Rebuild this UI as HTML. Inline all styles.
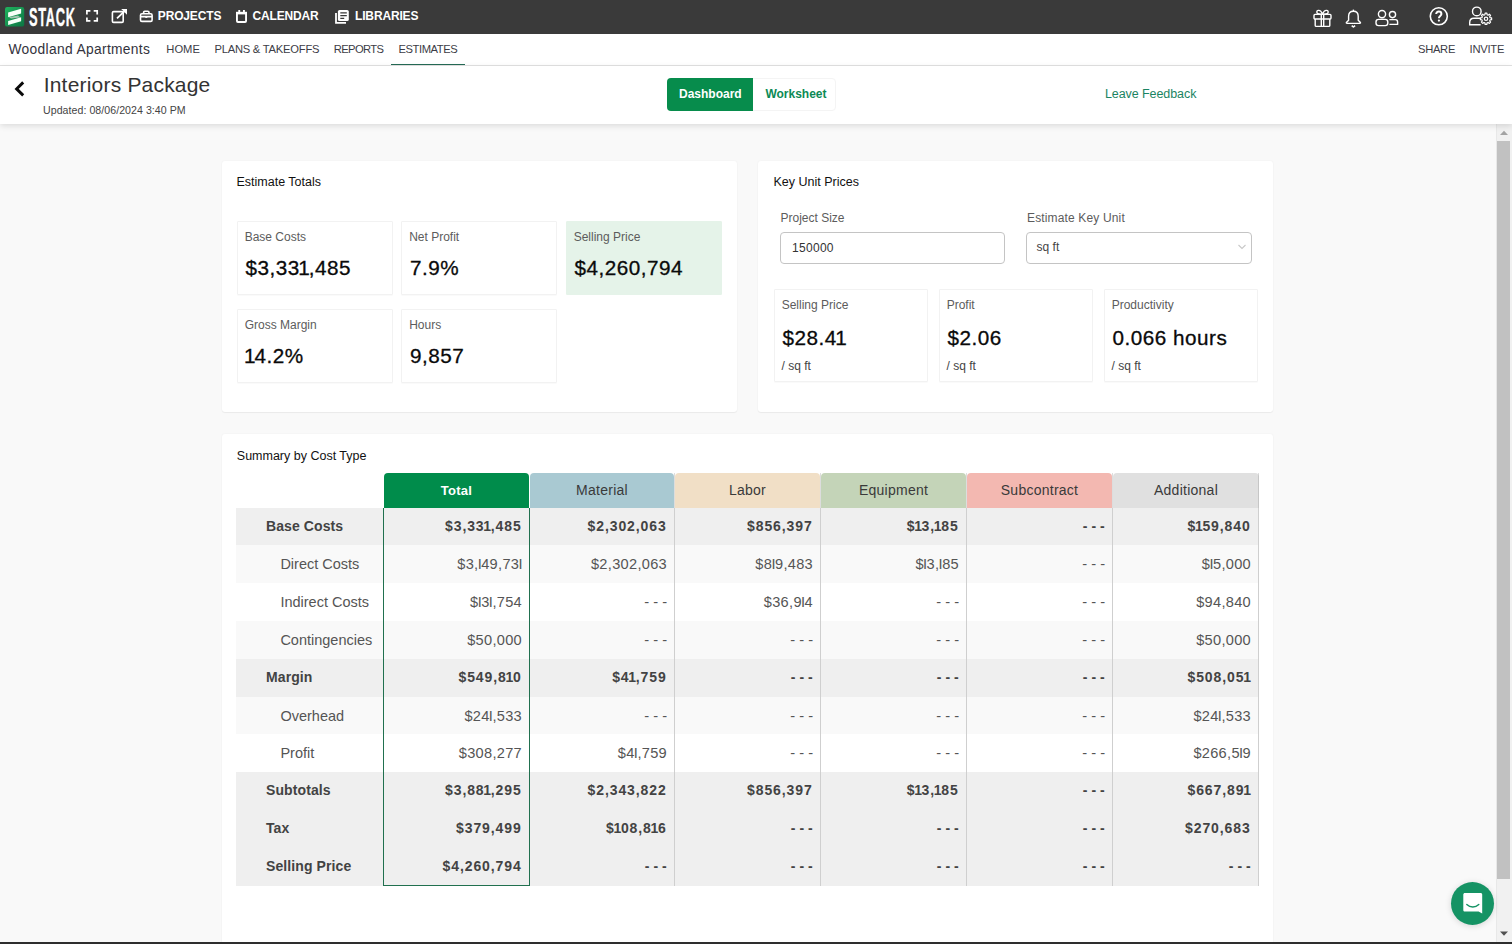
<!DOCTYPE html>
<html><head><meta charset="utf-8">
<style>
*{box-sizing:border-box;margin:0;padding:0}
html,body{width:1512px;height:944px;overflow:hidden}
body{position:relative;background:#f9f9f9;font-family:"Liberation Sans",sans-serif;color:#333}
.a{position:absolute;white-space:nowrap}
#top{position:absolute;left:0;top:0;width:1512px;height:34px;background:#3a3a3a}
.tn{position:absolute;top:9.5px;font-size:12px;line-height:12px;font-weight:700;color:#fff;letter-spacing:0}
#nav{position:absolute;left:0;top:34px;width:1512px;height:32px;background:#fff;border-bottom:1px solid #e2e2e2}
.nv{position:absolute;top:10.2px;font-size:11.2px;line-height:11.2px;color:#3c3c46}
#hdr{position:absolute;z-index:5;left:0;top:66px;width:1512px;height:58px;background:#fff;box-shadow:0 2px 6px rgba(0,0,0,.12)}
.card{position:absolute;background:#fff;border-radius:3px;box-shadow:0 0 2px rgba(0,0,0,.05),0 1px 1px rgba(0,0,0,.05)}
.ttl{position:absolute;font-size:12.5px;line-height:12.5px;color:#111;white-space:nowrap}
.tile{position:absolute;background:#fff;border:1px solid #f2f2f2;border-radius:1px;box-shadow:0 1px 1px rgba(0,0,0,.025)}
.tl{position:absolute;left:7.2px;font-size:12px;line-height:12px;color:#5c5c5c;white-space:nowrap}
.tv{position:absolute;left:8px;font-size:20.7px;line-height:20.7px;color:#0a0a0a;white-space:nowrap;letter-spacing:.5px;-webkit-text-stroke:.3px #0a0a0a}
.tv .o{font-style:normal;margin:0 -1.5px}
.tu{position:absolute;left:7px;font-size:12px;line-height:12px;color:#444;white-space:nowrap}
.inp{position:absolute;border:1px solid #c4c4c4;border-radius:4px;background:#fff}





/* TCSS START */
.th{position:absolute;top:473px;height:35px;line-height:35px;text-align:center;border-radius:4px 4px 0 0;white-space:nowrap;letter-spacing:.25px}
.tr{position:absolute;left:236px;width:1023px;height:37.81px}
.o{font-style:normal}
.tg .o{margin:0 -.8px}
.tb .o{margin:0 -1.25px}
.tb,.tg{position:absolute;height:37.81px;line-height:37.81px;white-space:nowrap}
.tb{font-weight:700;font-size:14px;color:#434343}
.tg{font-weight:400;font-size:14.5px;color:#555;padding-top:1px}
.lb{left:266px;letter-spacing:.1px}
.lr{left:280.4px}
.vv{text-align:right;padding-right:8px}
.tb.vv{letter-spacing:.9px;padding-right:7.4px}
.tg.vv{letter-spacing:.3px;font-size:14.6px;padding-right:7px}
.dd{letter-spacing:0!important}
.vd{position:absolute;width:1px;background:#cfcfcf}
.gb{position:absolute;border:1px solid #21704f;border-top:none}
/* TCSS END */
</style></head><body>

<!-- TOP BAR -->
<div id="top">
  <svg class="a" style="left:4px;top:6px" width="22" height="22" viewBox="0 0 22 22">
    <defs><linearGradient id="lg" x1="0" y1="0" x2="1" y2="1"><stop offset="0" stop-color="#20b45e"/><stop offset="1" stop-color="#0c7443"/></linearGradient></defs>
    <rect x="1" y="1" width="19.2" height="19.6" rx="2.2" fill="url(#lg)"/>
    <polygon points="4.1,6.6 17.1,2.8 17.1,7.4 4.1,11.2" fill="#f6fff8"/>
    <polygon points="4.1,15 17.1,11.2 17.1,15.3 4.1,19" fill="#f6fff8"/>
    <polygon points="5,11.2 14,9.6 16.5,11.4 7,12.6" fill="#d0d6d2" opacity=".75"/>
  </svg>
  <div class="a" style="left:28.8px;top:5px;font-size:25px;line-height:25px;font-weight:700;color:#fff;transform:scaleX(.515);transform-origin:0 0;letter-spacing:1.3px;-webkit-text-stroke:.35px #fff">STACK</div>
  <!-- expand -->
  <svg class="a" style="left:85px;top:9px" width="15" height="15" viewBox="0 0 15 15" fill="none" stroke="#fff" stroke-width="1.7">
    <path d="M1.9 5.6V1.9H5.4M8.7 1.9H12.2V5.6M12.2 8.4V11.9H8.7M5.4 11.9H1.9V8.4"/>
  </svg>
  <!-- external -->
  <svg class="a" style="left:111px;top:8px" width="17" height="16" viewBox="0 0 17 16" fill="none" stroke="#fff" stroke-width="1.6">
    <rect x="1.4" y="3.6" width="10.8" height="10.8" rx="1.2"/><path d="M6 10.4L14.6 2.2" stroke-width="1.8"/><path d="M10.2 1H16V6.8Z" fill="#fff" stroke="none"/>
  </svg>
  <!-- briefcase -->
  <svg class="a" style="left:139px;top:10px" width="15" height="13" viewBox="0 0 15 13" fill="none" stroke="#fff" stroke-width="1.6">
    <rect x="1.5" y="3.8" width="11.6" height="7.6" rx="1.4"/><path d="M4.6 3.8V2.4C4.6 1.6 5 1.2 5.8 1.2H8.8C9.6 1.2 10 1.6 10 2.4V3.8M1.5 6.6H13.1"/><rect x="6.3" y="6" width="2" height="1.9" fill="#fff" stroke="none"/>
  </svg>
  <div class="tn" style="left:157.8px;letter-spacing:-.15px">PROJECTS</div>
  <!-- calendar -->
  <svg class="a" style="left:235px;top:9px" width="14" height="15" viewBox="0 0 14 15" fill="none" stroke="#fff" stroke-width="1.9">
    <rect x="1.95" y="3.9" width="9.1" height="9.1" rx="1"/><rect x="1" y="2.8" width="11" height="2.6" fill="#fff" stroke="none"/><rect x="3.3" y="1" width="1.9" height="2.2" fill="#fff" stroke="none"/><rect x="8" y="1" width="1.9" height="2.2" fill="#fff" stroke="none"/>
  </svg>
  <div class="tn" style="left:252.5px;letter-spacing:-.15px">CALENDAR</div>
  <!-- libraries -->
  <svg class="a" style="left:334px;top:9px" width="16" height="16" viewBox="0 0 16 16" fill="none">
    <rect x="3.9" y="0.9" width="10.9" height="11.2" rx="1.6" fill="#fff"/><path d="M6.3 3.9H12.8M6.3 6.6H12.8M6.3 9.4H10.2" stroke="#3a3a3a" stroke-width="1.1"/><path d="M2 3.9V13.8H12" stroke="#fff" stroke-width="1.8"/>
  </svg>
  <div class="tn" style="left:355px;letter-spacing:-.15px">LIBRARIES</div>

  <!-- right icons -->
  <svg class="a" style="left:1312px;top:9px" width="21" height="19" viewBox="0 0 21 19" fill="none" stroke="#fff" stroke-width="1.4" stroke-linejoin="round">
    <rect x="2" y="5.4" width="17" height="4.6" rx="1"/><path d="M3.2 10V16.4C3.2 17 3.6 17.4 4.2 17.4H16.8C17.4 17.4 17.8 17 17.8 16.4V10"/><path d="M9.3 5.4V17.4M11.7 5.4V17.4"/>
    <path d="M10.5 5.2C9.5 2.5 7.8 1.2 6.2 1.4 4.6 1.6 4.4 3.6 5.6 4.6 6.6 5.4 8.4 5.3 10.5 5.2ZM10.5 5.2C11.5 2.5 13.2 1.2 14.8 1.4 16.4 1.6 16.6 3.6 15.4 4.6 14.4 5.4 12.6 5.3 10.5 5.2Z"/>
  </svg>
  <svg class="a" style="left:1344px;top:8px" width="19" height="21" viewBox="0 0 19 21" fill="none" stroke="#fff" stroke-width="1.4" stroke-linejoin="round">
    <path d="M9.4 3.2C6.4 3.2 4.6 5.4 4.6 8.2V12.2L2.6 14.2C2 14.8 2.3 15.4 3.1 15.4H15.7C16.5 15.4 16.8 14.8 16.2 14.2L14.2 12.2V8.2C14.2 5.4 12.4 3.2 9.4 3.2Z"/><path d="M9.4 1.6V3.2"/><path d="M7.7 17.6L9.4 19 11.1 17.6" stroke-width="1.6"/>
  </svg>
  <svg class="a" style="left:1374px;top:9px" width="26" height="19" viewBox="0 0 26 19" fill="none" stroke="#fff" stroke-width="1.4" stroke-linejoin="round">
    <circle cx="8" cy="5.1" r="3.6"/><rect x="2" y="10.4" width="11.8" height="6.2" rx="2.6"/><circle cx="18.5" cy="5.6" r="3.1"/><path d="M15.4 10.6H21.4C22.8 10.6 23.6 11.5 23.6 12.9V15.4H15.4"/>
  </svg>
  <svg class="a" style="left:1428px;top:6px" width="21" height="21" viewBox="0 0 21 21" fill="none" stroke="#fff" stroke-width="1.6">
    <circle cx="10.8" cy="10.3" r="8.5"/><path d="M8.2 8.1C8.2 6.6 9.3 5.6 10.8 5.6 12.3 5.6 13.4 6.6 13.4 8 13.4 9.9 10.9 10.1 10.9 12.2" stroke-width="2"/><circle cx="10.9" cy="14.6" r="1.1" fill="#fff" stroke="none"/>
  </svg>
  <svg class="a" style="left:1468px;top:5px" width="26" height="22" viewBox="0 0 26 22" fill="none" stroke="#fff" stroke-width="1.4">
    <circle cx="8.8" cy="6.4" r="4.3"/><path d="M12.6 19.8H1.7V17.4C1.7 14.8 3.3 13.2 5.8 13.2H12.4"/>
    <path d="M22.05 12.68 L23.63 12.94 L23.63 14.66 L22.05 14.92 L21.65 15.87 L22.59 17.18 L21.38 18.39 L20.07 17.45 L19.12 17.85 L18.86 19.43 L17.14 19.43 L16.88 17.850 L15.93 17.45 L14.62 18.39 L13.41 17.18 L14.35 15.87 L13.95 14.92 L12.37 14.66 L12.37 12.94 L13.95 12.68 L14.35 11.73 L13.41 10.42 L14.62 9.21 L15.93 10.15 L16.88 9.75 L17.14 8.17 L18.86 8.17 L19.12 9.75 L20.07 10.15 L21.38 9.21 L22.59 10.42 L21.65 11.73Z" stroke-width="1.2" stroke-linejoin="round"/><circle cx="18" cy="13.8" r="1.7" stroke-width="1.2"/>
  </svg>
</div>

<!-- NAV -->
<div id="nav">
  <div class="a" style="left:8.5px;top:9.2px;font-size:13.8px;line-height:13.8px;color:#33333d;letter-spacing:.33px">Woodland Apartments</div>
  <div class="nv" style="left:166.3px">HOME</div>
  <div class="nv" style="left:214.4px;letter-spacing:-.22px">PLANS &amp; TAKEOFFS</div>
  <div class="nv" style="left:333.7px;letter-spacing:-.6px">REPORTS</div>
  <div class="nv" style="left:398.5px;letter-spacing:-.42px">ESTIMATES</div>
  <div class="a" style="left:391px;top:29.6px;width:74px;height:1.4px;background:#256b56"></div>
  <div class="nv" style="left:1418px;letter-spacing:-.3px">SHARE</div>
  <div class="nv" style="left:1469.6px;letter-spacing:-.25px">INVITE</div>
</div>

<!-- HEADER -->
<div id="hdr">
  <svg class="a" style="left:12px;top:14px" width="14" height="18" viewBox="0 0 14 18" fill="none" stroke="#0a0a0a" stroke-width="2.9"><path d="M11.2 2.4L4.6 8.9 11.2 15.4"/></svg>
  <div class="a" style="left:43.7px;top:7.8px;font-size:21px;line-height:21px;color:#333;letter-spacing:.2px">Interiors Package</div>
  <div class="a" style="left:43px;top:38.6px;font-size:10.6px;line-height:10.6px;color:#444;letter-spacing:.05px">Updated: 08/06/2024 3:40 PM</div>
  <div class="a" style="left:667px;top:12px;width:169px;height:32.5px;border:1px solid #f4f4f4;border-radius:4px"></div>
  <div class="a" style="left:667px;top:12px;width:86px;height:32.5px;background:#078c4c;border-radius:4px 0 0 4px"></div>
  <div class="a" style="left:679px;top:22px;font-size:12px;line-height:12px;font-weight:700;color:#fff">Dashboard</div>
  <div class="a" style="left:765.4px;top:22px;font-size:12px;line-height:12px;font-weight:700;color:#0c8a55">Worksheet</div>
  <div class="a" style="left:1105px;top:21.6px;font-size:12.5px;line-height:12.5px;color:#1b8462;letter-spacing:-.08px">Leave Feedback</div>
</div>

<!-- CARD 1 -->
<div class="card" style="left:222px;top:161px;width:515px;height:251px">
  <div class="ttl" style="left:14.5px;top:15px">Estimate Totals</div>
  <div class="tile" style="left:14.5px;top:60px;width:156px;height:73.6px"><div class="tl" style="top:9.1px">Base Costs</div><div class="tv" style="top:36.2px">$3,33<i class="o">1</i>,485</div></div>
  <div class="tile" style="left:179px;top:60px;width:156px;height:73.6px"><div class="tl" style="top:9.1px">Net Profit</div><div class="tv" style="top:36.2px">7.9%</div></div>
  <div class="tile" style="left:343.5px;top:60px;width:156px;height:73.6px;background:#e5f3e9;border-color:#e5f3e9;box-shadow:none"><div class="tl" style="top:9.1px">Selling Price</div><div class="tv" style="top:36.2px">$4,260,794</div></div>
  <div class="tile" style="left:14.5px;top:148px;width:156px;height:73.6px"><div class="tl" style="top:9.1px">Gross Margin</div><div class="tv" style="top:36.2px"><i class="o">1</i>4.2%</div></div>
  <div class="tile" style="left:179px;top:148px;width:156px;height:73.6px"><div class="tl" style="top:9.1px">Hours</div><div class="tv" style="top:36.2px">9,857</div></div>
</div>

<!-- CARD 2 -->
<div class="card" style="left:758px;top:161px;width:515px;height:251px">
  <div class="ttl" style="left:15.5px;top:15.2px">Key Unit Prices</div>
  <div class="tl" style="left:22.5px;top:50.6px">Project Size</div>
  <div class="inp" style="left:22px;top:71px;width:225px;height:32px"></div>
  <div class="a" style="left:34px;top:80.5px;font-size:12px;line-height:12px;color:#333;letter-spacing:.3px">150000</div>
  <div class="tl" style="left:269px;top:50.6px;letter-spacing:.15px">Estimate Key Unit</div>
  <div class="inp" style="left:268px;top:71px;width:226px;height:32px"></div>
  <div class="a" style="left:278.6px;top:80px;font-size:12px;line-height:12px;color:#444">sq ft</div>
  <svg class="a" style="left:479px;top:82px" width="10" height="8" viewBox="0 0 10 8" fill="none" stroke="#c8c8c8" stroke-width="1.1"><path d="M1.5 2L5 5.5 8.5 2"/></svg>
  <div class="tile" style="left:15.5px;top:128px;width:154px;height:93px"><div class="tl" style="top:9.3px">Selling Price</div><div class="tv" style="top:38.2px">$28.4<i class="o">1</i></div><div class="tu" style="top:70px">/ sq ft</div></div>
  <div class="tile" style="left:180.5px;top:128px;width:154px;height:93px"><div class="tl" style="top:9.3px">Profit</div><div class="tv" style="top:38.2px">$2.06</div><div class="tu" style="top:70px">/ sq ft</div></div>
  <div class="tile" style="left:345.5px;top:128px;width:154px;height:93px"><div class="tl" style="top:9.3px">Productivity</div><div class="tv" style="top:38.2px">0.066 hours</div><div class="tu" style="top:70px">/ sq ft</div></div>
</div>

<!-- CARD 3 -->
<div class="card" style="left:222px;top:434px;width:1051px;height:540px">
  <div class="ttl" style="left:14.8px;top:15.5px">Summary by Cost Type</div>
</div>



<!-- SCROLL -->
<div class="a" style="left:1496px;top:124px;width:16px;height:818px;background:#f1f1f1;border-left:1px solid #e8e8e8"></div>
<div class="a" style="left:1497px;top:141px;width:13px;height:738px;background:#c1c1c1"></div>
<svg class="a" style="left:1499px;top:129px" width="10" height="7" viewBox="0 0 10 7"><path d="M1 6H9L5 1.8Z" fill="#a3a3a3"/></svg>
<svg class="a" style="left:1499px;top:930px" width="10" height="7" viewBox="0 0 10 7"><path d="M1 1.5H9L5 5.8Z" fill="#505050"/></svg>
<!-- CHAT -->
<div class="a" style="left:1451px;top:882px;width:43px;height:43px;border-radius:50%;background:#159364;box-shadow:0 1px 6px rgba(0,0,0,.15)"></div>
<svg class="a" style="left:1462px;top:892px" width="22" height="23" viewBox="0 0 22 23"><path d="M1.3 2.6C1.3 1.7 2 1 2.9 1H18.6C19.5 1 20.2 1.7 20.2 2.6V21.6L16.6 19.6H2.9C2 19.6 1.3 18.9 1.3 18Z" fill="#fff"/><path d="M4.8 12.6C8.2 15.8 13.4 15.8 16.8 12.6" fill="none" stroke="#159364" stroke-width="1.4" stroke-linecap="round"/></svg>
<div class="a" style="left:0;top:942px;width:1512px;height:2px;background:#2e2e2e"></div>




<!-- TABLE START -->
<div class="th" style="left:384px;width:145px;background:#008c4b;color:#fff;font-weight:700;font-size:13px">Total</div>
<div class="th" style="left:530px;width:144px;background:#a9c9d2;color:#3a3a3a;font-weight:400;font-size:14px">Material</div>
<div class="th" style="left:675px;width:145px;background:#f1dfc6;color:#3a3a3a;font-weight:400;font-size:14px">Labor</div>
<div class="th" style="left:821px;width:145px;background:#c4d4b8;color:#3a3a3a;font-weight:400;font-size:14px">Equipment</div>
<div class="th" style="left:967px;width:145px;background:#f3b8b1;color:#3a3a3a;font-weight:400;font-size:14px">Subcontract</div>
<div class="th" style="left:1113px;width:146px;background:#e0e0e0;color:#3a3a3a;font-weight:400;font-size:14px">Additional</div>
<div class="tr" style="top:507.60px;background:#efefef"></div>
<div class="tb lb" style="top:507.60px">Base Costs</div>
<div class="tb vv" style="top:507.60px;left:383px;width:146px">$3,33<i class="o">1</i>,485</div>
<div class="tb vv" style="top:507.60px;left:529px;width:145px">$2,302,063</div>
<div class="tb vv" style="top:507.60px;left:674px;width:146px">$856,397</div>
<div class="tb vv" style="top:507.60px;left:820px;width:146px">$<i class="o">1</i>3,<i class="o">1</i>85</div>
<div class="tb dd vv" style="top:507.60px;left:966px;width:146px">- - -</div>
<div class="tb vv" style="top:507.60px;left:1112px;width:146px">$<i class="o">1</i>59,840</div>
<div class="tr" style="top:545.41px;background:#f9f9f9"></div>
<div class="tg lr" style="top:545.41px">Direct Costs</div>
<div class="tg vv" style="top:545.41px;left:383px;width:146px">$3,<i class="o">I</i>49,73<i class="o">I</i></div>
<div class="tg vv" style="top:545.41px;left:529px;width:145px">$2,302,063</div>
<div class="tg vv" style="top:545.41px;left:674px;width:146px">$8<i class="o">I</i>9,483</div>
<div class="tg vv" style="top:545.41px;left:820px;width:146px">$<i class="o">I</i>3,<i class="o">I</i>85</div>
<div class="tg dd vv" style="top:545.41px;left:966px;width:146px">- - -</div>
<div class="tg vv" style="top:545.41px;left:1112px;width:146px">$<i class="o">I</i>5,000</div>
<div class="tr" style="top:583.22px;background:#fff"></div>
<div class="tg lr" style="top:583.22px">Indirect Costs</div>
<div class="tg vv" style="top:583.22px;left:383px;width:146px">$<i class="o">I</i>3<i class="o">I</i>,754</div>
<div class="tg dd vv" style="top:583.22px;left:529px;width:145px">- - -</div>
<div class="tg vv" style="top:583.22px;left:674px;width:146px">$36,9<i class="o">I</i>4</div>
<div class="tg dd vv" style="top:583.22px;left:820px;width:146px">- - -</div>
<div class="tg dd vv" style="top:583.22px;left:966px;width:146px">- - -</div>
<div class="tg vv" style="top:583.22px;left:1112px;width:146px">$94,840</div>
<div class="tr" style="top:621.03px;background:#f9f9f9"></div>
<div class="tg lr" style="top:621.03px">Contingencies</div>
<div class="tg vv" style="top:621.03px;left:383px;width:146px">$50,000</div>
<div class="tg dd vv" style="top:621.03px;left:529px;width:145px">- - -</div>
<div class="tg dd vv" style="top:621.03px;left:674px;width:146px">- - -</div>
<div class="tg dd vv" style="top:621.03px;left:820px;width:146px">- - -</div>
<div class="tg dd vv" style="top:621.03px;left:966px;width:146px">- - -</div>
<div class="tg vv" style="top:621.03px;left:1112px;width:146px">$50,000</div>
<div class="tr" style="top:658.84px;background:#efefef"></div>
<div class="tb lb" style="top:658.84px">Margin</div>
<div class="tb vv" style="top:658.84px;left:383px;width:146px">$549,8<i class="o">1</i>0</div>
<div class="tb vv" style="top:658.84px;left:529px;width:145px">$4<i class="o">1</i>,759</div>
<div class="tb dd vv" style="top:658.84px;left:674px;width:146px">- - -</div>
<div class="tb dd vv" style="top:658.84px;left:820px;width:146px">- - -</div>
<div class="tb dd vv" style="top:658.84px;left:966px;width:146px">- - -</div>
<div class="tb vv" style="top:658.84px;left:1112px;width:146px">$508,05<i class="o">1</i></div>
<div class="tr" style="top:696.65px;background:#f9f9f9"></div>
<div class="tg lr" style="top:696.65px">Overhead</div>
<div class="tg vv" style="top:696.65px;left:383px;width:146px">$24<i class="o">I</i>,533</div>
<div class="tg dd vv" style="top:696.65px;left:529px;width:145px">- - -</div>
<div class="tg dd vv" style="top:696.65px;left:674px;width:146px">- - -</div>
<div class="tg dd vv" style="top:696.65px;left:820px;width:146px">- - -</div>
<div class="tg dd vv" style="top:696.65px;left:966px;width:146px">- - -</div>
<div class="tg vv" style="top:696.65px;left:1112px;width:146px">$24<i class="o">I</i>,533</div>
<div class="tr" style="top:734.46px;background:#fff"></div>
<div class="tg lr" style="top:734.46px">Profit</div>
<div class="tg vv" style="top:734.46px;left:383px;width:146px">$308,277</div>
<div class="tg vv" style="top:734.46px;left:529px;width:145px">$4<i class="o">I</i>,759</div>
<div class="tg dd vv" style="top:734.46px;left:674px;width:146px">- - -</div>
<div class="tg dd vv" style="top:734.46px;left:820px;width:146px">- - -</div>
<div class="tg dd vv" style="top:734.46px;left:966px;width:146px">- - -</div>
<div class="tg vv" style="top:734.46px;left:1112px;width:146px">$266,5<i class="o">I</i>9</div>
<div class="tr" style="top:772.27px;background:#efefef"></div>
<div class="tb lb" style="top:772.27px">Subtotals</div>
<div class="tb vv" style="top:772.27px;left:383px;width:146px">$3,88<i class="o">1</i>,295</div>
<div class="tb vv" style="top:772.27px;left:529px;width:145px">$2,343,822</div>
<div class="tb vv" style="top:772.27px;left:674px;width:146px">$856,397</div>
<div class="tb vv" style="top:772.27px;left:820px;width:146px">$<i class="o">1</i>3,<i class="o">1</i>85</div>
<div class="tb dd vv" style="top:772.27px;left:966px;width:146px">- - -</div>
<div class="tb vv" style="top:772.27px;left:1112px;width:146px">$667,89<i class="o">1</i></div>
<div class="tr" style="top:810.08px;background:#efefef"></div>
<div class="tb lb" style="top:810.08px">Tax</div>
<div class="tb vv" style="top:810.08px;left:383px;width:146px">$379,499</div>
<div class="tb vv" style="top:810.08px;left:529px;width:145px">$<i class="o">1</i>08,8<i class="o">1</i>6</div>
<div class="tb dd vv" style="top:810.08px;left:674px;width:146px">- - -</div>
<div class="tb dd vv" style="top:810.08px;left:820px;width:146px">- - -</div>
<div class="tb dd vv" style="top:810.08px;left:966px;width:146px">- - -</div>
<div class="tb vv" style="top:810.08px;left:1112px;width:146px">$270,683</div>
<div class="tr" style="top:847.89px;background:#efefef"></div>
<div class="tb lb" style="top:847.89px">Selling Price</div>
<div class="tb vv" style="top:847.89px;left:383px;width:146px">$4,260,794</div>
<div class="tb dd vv" style="top:847.89px;left:529px;width:145px">- - -</div>
<div class="tb dd vv" style="top:847.89px;left:674px;width:146px">- - -</div>
<div class="tb dd vv" style="top:847.89px;left:820px;width:146px">- - -</div>
<div class="tb dd vv" style="top:847.89px;left:966px;width:146px">- - -</div>
<div class="tb dd vv" style="top:847.89px;left:1112px;width:146px">- - -</div>
<div class="vd" style="left:674px;top:507.6px;height:378.10px"></div>
<div class="vd" style="left:674px;top:473px;height:34.60px;background:rgba(120,120,120,.25)"></div>
<div class="vd" style="left:820px;top:507.6px;height:378.10px"></div>
<div class="vd" style="left:820px;top:473px;height:34.60px;background:rgba(120,120,120,.25)"></div>
<div class="vd" style="left:966px;top:507.6px;height:378.10px"></div>
<div class="vd" style="left:966px;top:473px;height:34.60px;background:rgba(120,120,120,.25)"></div>
<div class="vd" style="left:1112px;top:507.6px;height:378.10px"></div>
<div class="vd" style="left:1112px;top:473px;height:34.60px;background:rgba(120,120,120,.25)"></div>
<div class="vd" style="left:1258px;top:507.6px;height:378.10px"></div>
<div class="vd" style="left:1258px;top:473px;height:34.60px;background:rgba(120,120,120,.25)"></div>
<div class="gb" style="left:383px;top:507.6px;width:147px;height:378.10px"></div>
<!-- TABLE END -->
</body></html>
